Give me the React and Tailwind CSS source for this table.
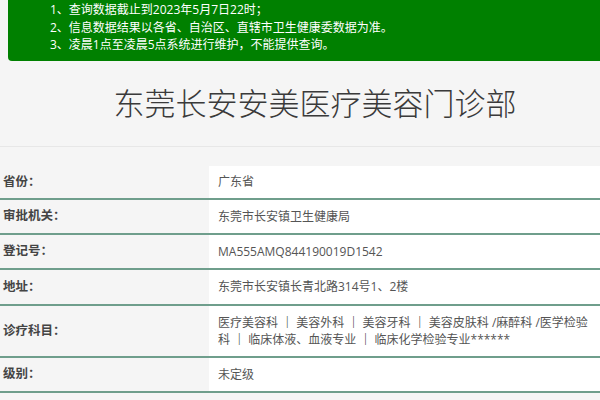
import React from "react";

const Sep = () => <span className="font-bold text-[#333]"> ｜ </span>;

const rows = [
  { label: "省份：", value: "广东省", h: "h-[34px]" },
  { label: "审批机关：", value: "东莞市长安镇卫生健康局", h: "h-[35px]" },
  { label: "登记号：", value: "MA555AMQ844190019D1542", h: "h-[35px]" },
  { label: "地址：", value: "东莞市长安镇长青北路314号1、2楼", h: "h-[36px]" },
  {
    label: "诊疗科目：",
    value: (
      <>
        医疗美容科<Sep />美容外科<Sep />美容牙科<Sep />美容皮肤科 /麻醉科 /医学检验科<Sep />临床体液、血液专业<Sep />临床化学检验专业******
      </>
    ),
    h: "h-[52px]",
  },
  { label: "级别：", value: "未定级", h: "h-[35px]" },
];

export default function App() {
  return (
    <div
      className="w-[600px] h-[400px] overflow-hidden bg-[#f5f5f5]"
      style={{ fontFamily: '"Open Sans", "Noto Sans CJK SC", sans-serif' }}
    >
      <div className="ml-[8px] h-[61px] bg-[#008000] rounded-bl-[4px] text-white text-[12px] leading-[17.5px] pl-[42px] pt-[1px]">
        <div>1、查询数据截止到2023年5月7日22时；</div>
        <div>2、信息数据结果以各省、自治区、直辖市卫生健康委数据为准。</div>
        <div>3、凌晨1点至凌晨5点系统进行维护，不能提供查询。</div>
      </div>
      <div className="h-[86px] flex items-center justify-center border-b border-[#e7e7e7] pl-[30px]">
        <h1 className="text-[31px] leading-none text-[#3a3a3a] font-light">
          东莞长安安美医疗美容门诊部
        </h1>
      </div>
      <div className="mt-[19px]">
        {rows.map((r, i) => (
          <div
            key={i}
            className={`grid grid-cols-[209px_1fr] border-b-2 border-[#6f9e8c] ${r.h}`}
          >
            <div className="flex items-center pl-[3px] text-[12.5px] font-bold text-[#444]">
              {r.label}
            </div>
            <div className="flex items-center bg-white pl-[9px] pr-[6px] text-[12px] leading-[17.5px] text-[#555]">
              <span>{r.value}</span>
            </div>
          </div>
        ))}
      </div>
    </div>
  );
}
